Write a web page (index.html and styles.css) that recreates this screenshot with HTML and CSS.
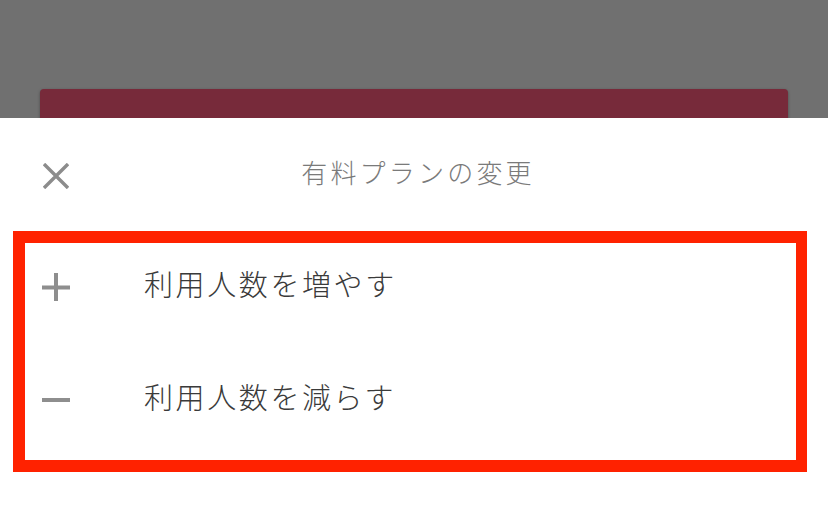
FILE: index.html
```html
<!DOCTYPE html>
<html lang="ja">
<head>
<meta charset="utf-8">
<link rel="stylesheet" href="styles.css">
</head>
<body>
<div class="backdrop">
  <div class="card"></div>
</div>
<div class="sheet">
  <div class="header">
    <svg class="close" viewBox="0 0 26 26" width="26" height="26">
      <path d="M1 1L25 25M25 1L1 25" stroke="#8c8c8c" stroke-width="3.4" fill="none"/>
    </svg>
    <div class="title">有料プランの変更</div>
    <div></div>
  </div>
  <div class="options">
    <div class="row">
      <svg class="icon" viewBox="0 0 28 28" width="28" height="28">
        <path d="M0 14.5H28M14 0V28" stroke="#8e8e8e" stroke-width="4" fill="none"/>
      </svg>
      <span class="label">利用人数を増やす</span>
    </div>
    <div class="row">
      <svg class="icon" viewBox="0 0 28 28" width="28" height="28">
        <path d="M0 14H28" stroke="#8e8e8e" stroke-width="4" fill="none"/>
      </svg>
      <span class="label">利用人数を減らす</span>
    </div>
  </div>
</div>
</body>
</html>
```

FILE: styles.css
```css
html, body {
  margin: 0;
  padding: 0;
  background: #ffffff;
  font-family: "Noto Sans CJK JP", "Noto Sans", sans-serif;
}
.backdrop {
  height: 118px;
  background: #707070;
  padding: 89px 40px 0 40px;
  box-sizing: border-box;
  overflow: hidden;
}
.card {
  height: 60px;
  background: #772a3a;
  border-radius: 4px;
  box-shadow: 0 1px 3px rgba(0,0,0,0.35);
}
.sheet {
  background: #ffffff;
  height: 393px;
}
.header {
  height: 113px;
  display: grid;
  grid-template-columns: 1fr auto 1fr;
  align-items: center;
  padding: 0 0 0 43px;
  box-sizing: border-box;
}
.close {
  display: block;
  margin-top: 2px;
}
.title {
  font-size: 26px;
  font-weight: 300;
  letter-spacing: 3.2px;
  color: #7a7a7a;
  line-height: 1;
  padding-left: 8px;
  padding-bottom: 5px;
  margin-left: -43px;
}
.options {
  margin: 0 21px 0 13px;
  border: 12px solid #ff2200;
  border-right-width: 11px;
  padding: 0 0 16px 0;
  display: flex;
  flex-direction: column;
  gap: 25px;
}
.row {
  height: 88px;
  display: flex;
  align-items: center;
  padding-left: 17px;
}
.icon {
  display: block;
  flex: none;
}
.label {
  margin-left: 74px;
  padding-bottom: 8px;
  font-size: 29px;
  font-weight: 300;
  letter-spacing: 2.6px;
  color: #3a3a3a;
  line-height: 1;
}
```
